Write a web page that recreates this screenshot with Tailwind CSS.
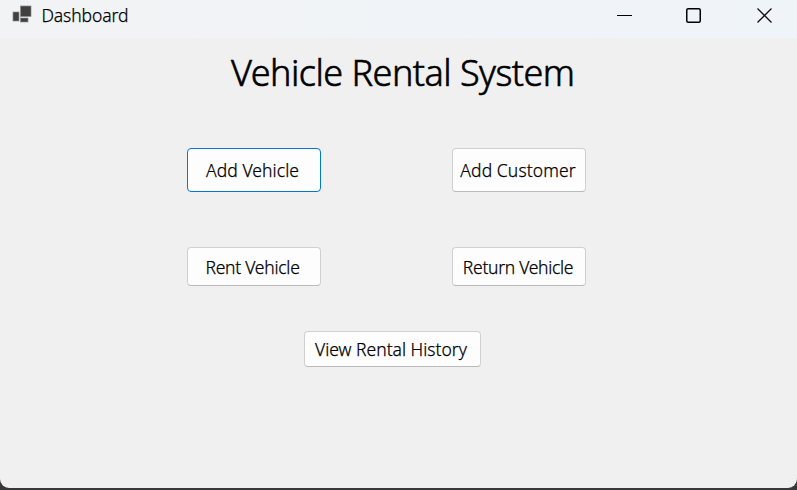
<!DOCTYPE html>
<html lang="en">
<head>
<meta charset="utf-8">
<title>Dashboard</title>
<script src="https://cdn.jsdelivr.net/npm/@tailwindcss/browser@4"></script>
</head>
<body class="h-[490px] w-[797px] overflow-hidden bg-[#383838] font-['Noto_Sans','Open_Sans',sans-serif] font-light text-black [-webkit-text-stroke:0.25px_black]">
<div class="flex h-[488px] flex-col overflow-hidden rounded-b-[9px] bg-[#f0f0f0]">
  <header class="flex h-[38px] shrink-0 items-start justify-between bg-linear-to-r from-[#f2f3f5] to-[#eff4f9] pr-6 pl-3">
    <div class="flex items-start">
      <svg class="mt-[5px] h-[18px] w-5" viewBox="0 0 20 18" fill="#404040" stroke="#8c8c8c" stroke-width=".7">
        <rect x="8.5" y="1" width="10.5" height="10.5"/><rect x="1" y="7" width="6" height="9"/><rect x="8.5" y="13" width="7.5" height="4"/>
      </svg>
      <span class="ml-[9.5px] text-[17.5px] leading-[31px] tracking-[-0.1px] whitespace-nowrap">Dashboard</span>
    </div>
    <div class="flex pt-2">
      <svg class="size-4" viewBox="0 0 16 16" stroke="#000"><path d="M0 7.5h15"/></svg>
      <svg class="ml-[53px] size-4" viewBox="0 0 16 16" fill="none" stroke="#000" stroke-width="1.5"><rect x=".75" y=".75" width="13.5" height="13.5" rx="1.5"/></svg>
      <svg class="ml-[55px] size-4" viewBox="0 0 16 16" stroke="#111" stroke-width="1.3"><path d="M.5.5l14 14M14.5.5l-14 14"/></svg>
    </div>
  </header>
  <main class="flex flex-col">
    <h1 class="h-[110px] pl-[231px] text-[36px] leading-[70px] font-light tracking-[-0.53px] whitespace-nowrap [-webkit-text-stroke:0.6px_black]">Vehicle Rental System</h1>
    <div class="grid grid-cols-[134px_134px] gap-x-[131px] pl-[187px] text-[17.5px] whitespace-nowrap">
      <button class="h-11 rounded-[4px] border border-[#0078d4] bg-[#fdfdfd] pt-px pr-[3px] tracking-[0.08px]">Add Vehicle</button>
      <button class="h-11 rounded-[4px] border border-[#d0d0d0] border-b-[#bababa] bg-[#fdfdfd] pt-px pr-0.5 tracking-[0.1px]">Add Customer</button>
      <button class="mt-[55px] h-[39px] rounded-[4px] border border-[#d0d0d0] border-b-[#bababa] bg-[#fdfdfd] pt-px pr-[3px] tracking-[-0.25px]">Rent Vehicle</button>
      <button class="mt-[55px] h-[39px] rounded-[4px] border border-[#d0d0d0] border-b-[#bababa] bg-[#fdfdfd] pt-px pr-0.5 tracking-[-0.3px]">Return Vehicle</button>
    </div>
    <button class="mt-[45px] ml-[304px] h-9 w-[177px] rounded-[4px] border border-[#d0d0d0] border-b-[#bababa] bg-[#fdfdfd] pt-px pr-[3px] text-[17.5px] tracking-normal whitespace-nowrap">View Rental History</button>
  </main>
</div>
</body>
</html>
